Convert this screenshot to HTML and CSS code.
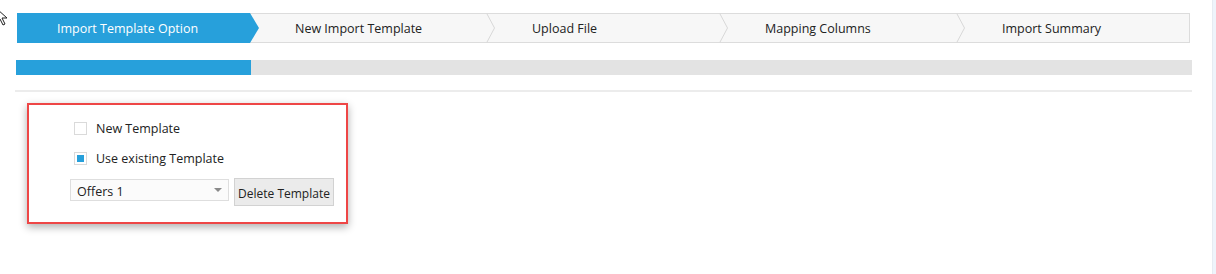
FILE: index.html
```html
<!DOCTYPE html>
<html>
<head>
<meta charset="utf-8">
<link rel="stylesheet" href="styles.css">
</head>
<body>
<div class="app">
  <main class="main">
    <ol class="wizard">
      <li class="step active">Import Template Option
        <svg class="arrow" width="10" height="30" viewBox="0 0 10 30"><polygon points="0,0 1,0 10,15 1,30 0,30" fill="#27a0db"/></svg>
      </li>
      <li class="step">New Import Template
        <svg class="chev" width="10" height="30" viewBox="0 0 10 30"><polyline points="0.5,0 8.5,15 0.5,30" fill="#f7f7f7" stroke="#d8d8d8" stroke-width="1"/></svg>
      </li>
      <li class="step">Upload File
        <svg class="chev" width="10" height="30" viewBox="0 0 10 30"><polyline points="0.5,0 8.5,15 0.5,30" fill="#f7f7f7" stroke="#d8d8d8" stroke-width="1"/></svg>
      </li>
      <li class="step">Mapping Columns
        <svg class="chev" width="10" height="30" viewBox="0 0 10 30"><polyline points="0.5,0 8.5,15 0.5,30" fill="#f7f7f7" stroke="#d8d8d8" stroke-width="1"/></svg>
      </li>
      <li class="step">Import Summary</li>
    </ol>
    <div class="progress"><div class="progress-fill" style="width: 235px"></div></div>
    <div class="divider"></div>
    <section class="panel">
      <label class="check-row">
        <span class="checkbox"></span>
        <span class="check-label">New Template</span>
      </label>
      <label class="check-row">
        <span class="checkbox checked"><span class="tick"></span></span>
        <span class="check-label">Use existing Template</span>
      </label>
      <div class="controls">
        <div class="select">
          <span class="select-value">Offers 1</span>
          <span class="caret"></span>
        </div>
        <button class="btn">Delete Template</button>
      </div>
    </section>
  </main>
  <div class="scrollbar"></div>
</div>
<svg class="cursor" width="12" height="18" viewBox="0 0 12 18"><polygon points="-3,0 -3,13 0,10 3,16 5,15 2,9 7,9" fill="#fff" stroke="#222" stroke-width="1"/></svg>
</body>
</html>
```
FILE: styles.css
```css
* { box-sizing: border-box; }
html, body { margin: 0; padding: 0; background: #fff; }
body {
  font-family: "Segoe UI", "Open Sans", "Noto Sans", sans-serif;
  font-size: 12.5px;
  color: #222;
  width: 1216px;
  height: 274px;
  overflow: hidden;
  position: relative;
}
.app { display: flex; height: 274px; }
.main { flex: 1; padding: 13px 20px 0 16px; }
.scrollbar {
  width: 4px;
  background: #eef4fb;
  border-left: 1px solid #e6ebf2;
}
.wizard {
  list-style: none;
  margin: 0 2px 0 1px;
  padding: 0;
  display: flex;
  height: 30px;
  background: #f7f7f7;
  border: 1px solid #dcdcdc;
}
.step {
  flex: 0 0 233px;
  min-width: 0;
  position: relative;
  padding: 1px 0 0 45px;
  line-height: 28px;
  white-space: nowrap;
  color: #222;
}
.step:nth-child(2), .step:nth-child(4) { flex-basis: 237px; }
.step:last-child { flex: 1 1 auto; }
.step.active {
  background: #27a0db;
  color: #fff;
  margin: -1px 0 -1px -1px;
  line-height: 30px;
  padding-left: 40px;
}
.arrow { position: absolute; right: -9px; top: 0; z-index: 2; }
.chev { position: absolute; right: -9px; top: -1px; z-index: 1; }
.progress {
  margin-top: 17px;
  height: 15px;
  background: #e3e3e3;
}
.progress-fill { height: 15px; background: #27a0db; }
.divider {
  margin-top: 15px;
  margin-left: -1px;
  height: 2px;
  background: #ececec;
}
.panel {
  margin: 11px 0 0 11px;
  width: 321px;
  height: 121px;
  border: 2px solid #ee4646;
  box-shadow: 0 3px 8px rgba(0, 0, 0, 0.32);
  padding: 13px 0 0 41px;
}
.check-row {
  display: flex;
  align-items: center;
  height: 20px;
  margin-left: 4px;
  margin-bottom: 10px;
}
.checkbox {
  width: 13px;
  height: 13px;
  border: 1px solid #dadada;
  background: #fff;
  display: flex;
  align-items: center;
  justify-content: center;
}
.tick { width: 7px; height: 7px; background: #27a0db; }
.check-label { margin-left: 9px; }
.controls { display: flex; align-items: flex-start; margin-top: 2px; }
.select {
  margin-top: 1px;
  width: 159px;
  height: 22px;
  border: 1px solid #dedede;
  background: #fbfbfb;
  display: flex;
  align-items: center;
  justify-content: space-between;
  padding: 2px 6px 0 6px;
}
.caret {
  width: 0; height: 0;
  border-left: 4px solid transparent;
  border-right: 4px solid transparent;
  border-top: 4px solid #8a8a8a;
  margin-top: -3px;
}
.btn {
  margin-left: 5px;
  width: 100px;
  height: 28px;
  background: #ebebeb;
  border: 1px solid #d2d2d2;
  font: inherit;
  font-size: 12px;
  color: #222;
  padding: 2px 0 0 0;
}
.cursor { position: absolute; left: 0; top: 9px; }
```
